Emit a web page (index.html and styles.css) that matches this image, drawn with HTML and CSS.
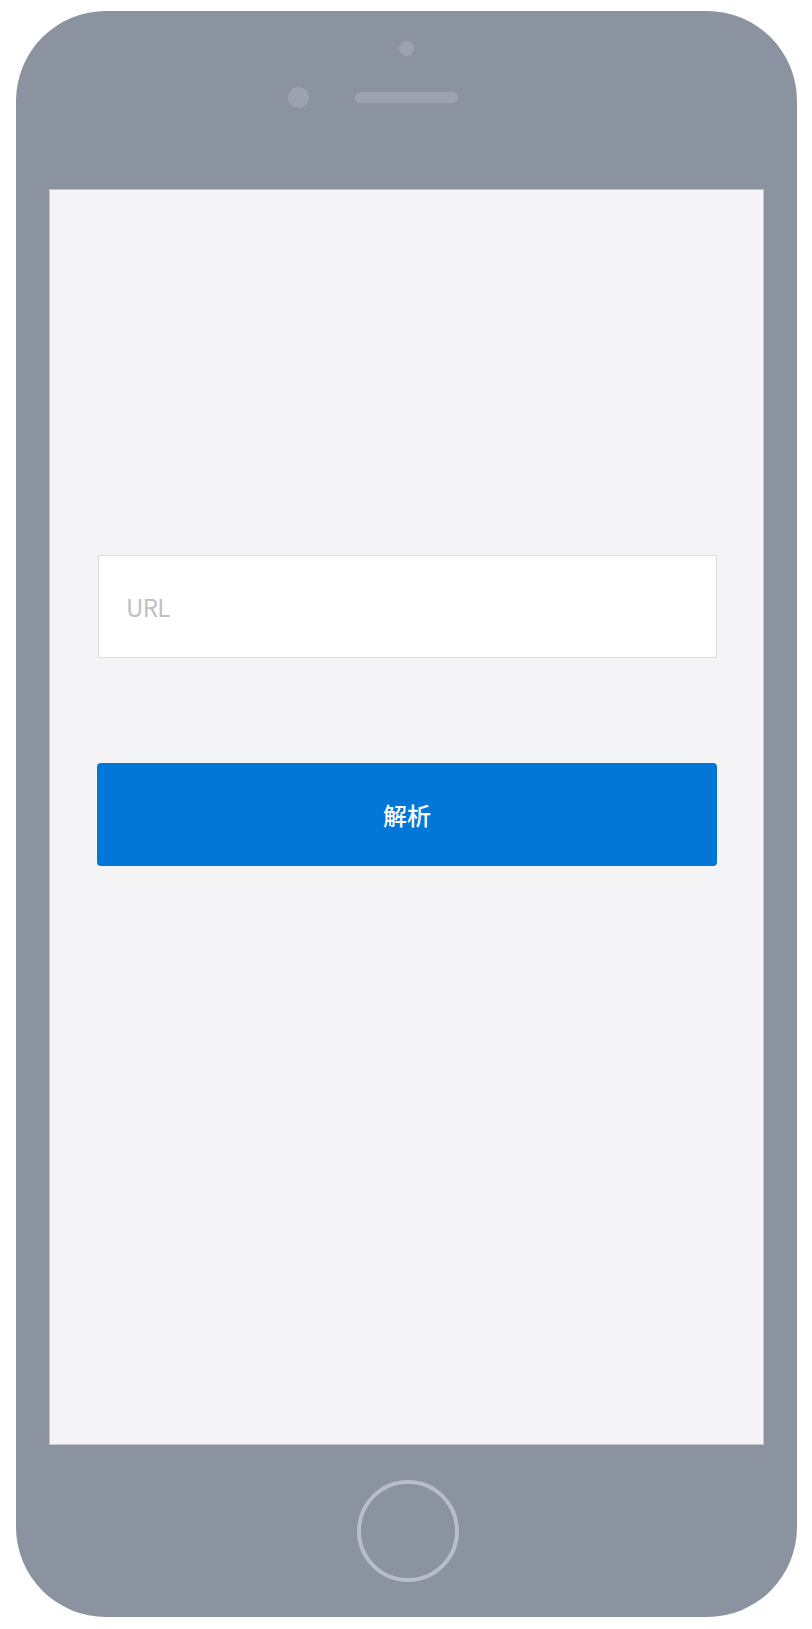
FILE: index.html
```html
<!DOCTYPE html>
<html lang="zh">
<head>
<meta charset="utf-8">
<title>解析</title>
<link rel="stylesheet" href="styles.css">
</head>
<body>
<div class="phone">
  <div class="bezel-top">
    <div class="sensor"></div>
    <div class="ear-row">
      <div class="camera"></div>
      <div class="speaker"></div>
      <div></div>
    </div>
  </div>
  <div class="screen">
    <input class="url-input" type="text" placeholder="URL">
    <button class="parse-btn" type="button">解析</button>
  </div>
  <div class="bezel-bottom">
    <div class="home"></div>
  </div>
</div>
</body>
</html>
```

FILE: styles.css
```css
* { box-sizing: border-box; }
html, body { margin: 0; padding: 0; background: #ffffff; }
body {
  width: 812px;
  height: 1629px;
  padding: 11px 0 0 16px;
  font-family: "Noto Sans CJK SC", "Noto Sans", sans-serif;
}
.phone {
  width: 781px;
  height: 1606px;
  background: #8b92a0;
  border-radius: 90px;
  display: flex;
  flex-direction: column;
}
.bezel-top {
  height: 178px;
  padding-top: 30px;
  display: flex;
  flex-direction: column;
  align-items: center;
}
.sensor {
  width: 15px;
  height: 15px;
  border-radius: 50%;
  background: #9ea2b0;
}
.ear-row {
  margin-top: 31px;
  width: 100%;
  display: grid;
  grid-template-columns: 1fr 103px 1fr;
  align-items: center;
}
.camera {
  justify-self: end;
  margin-right: 46px;
  width: 21px;
  height: 21px;
  border-radius: 50%;
  background: #9ea2b0;
}
.speaker {
  height: 11px;
  border-radius: 6px;
  background: #9ea2b0;
}
.screen {
  margin-left: 33px;
  width: 715px;
  height: 1256px;
  background: #f4f4f6;
  border: 1px solid #c3c6ce;
  padding-top: 365px;
  display: flex;
  flex-direction: column;
}
.url-input {
  margin-left: 48px;
  width: 619px;
  height: 103px;
  border: 1px solid #dddddf;
  background: #ffffff;
  padding: 0 0 0 27px;
  font-family: "Noto Sans CJK SC", "Noto Sans", sans-serif;
  font-size: 24px;
  letter-spacing: -0.6px;
  color: #333333;
  outline: none;
  border-radius: 0;
}
.url-input::placeholder { color: #c0c0c2; }
.parse-btn {
  margin-top: 105px;
  margin-left: 47px;
  width: 620px;
  height: 103px;
  border: none;
  border-radius: 4px;
  background: #0277d7;
  color: #ffffff;
  font-family: "Noto Sans CJK SC", "Noto Sans", sans-serif;
  font-size: 24px;
  font-weight: 500;
  padding: 0;
}
.bezel-bottom {
  flex: 1;
  display: flex;
  align-items: center;
  justify-content: center;
}
.home {
  margin-left: 3px;
  width: 102px;
  height: 102px;
  border-radius: 50%;
  border: 4px solid #b9bdc9;
}
```
